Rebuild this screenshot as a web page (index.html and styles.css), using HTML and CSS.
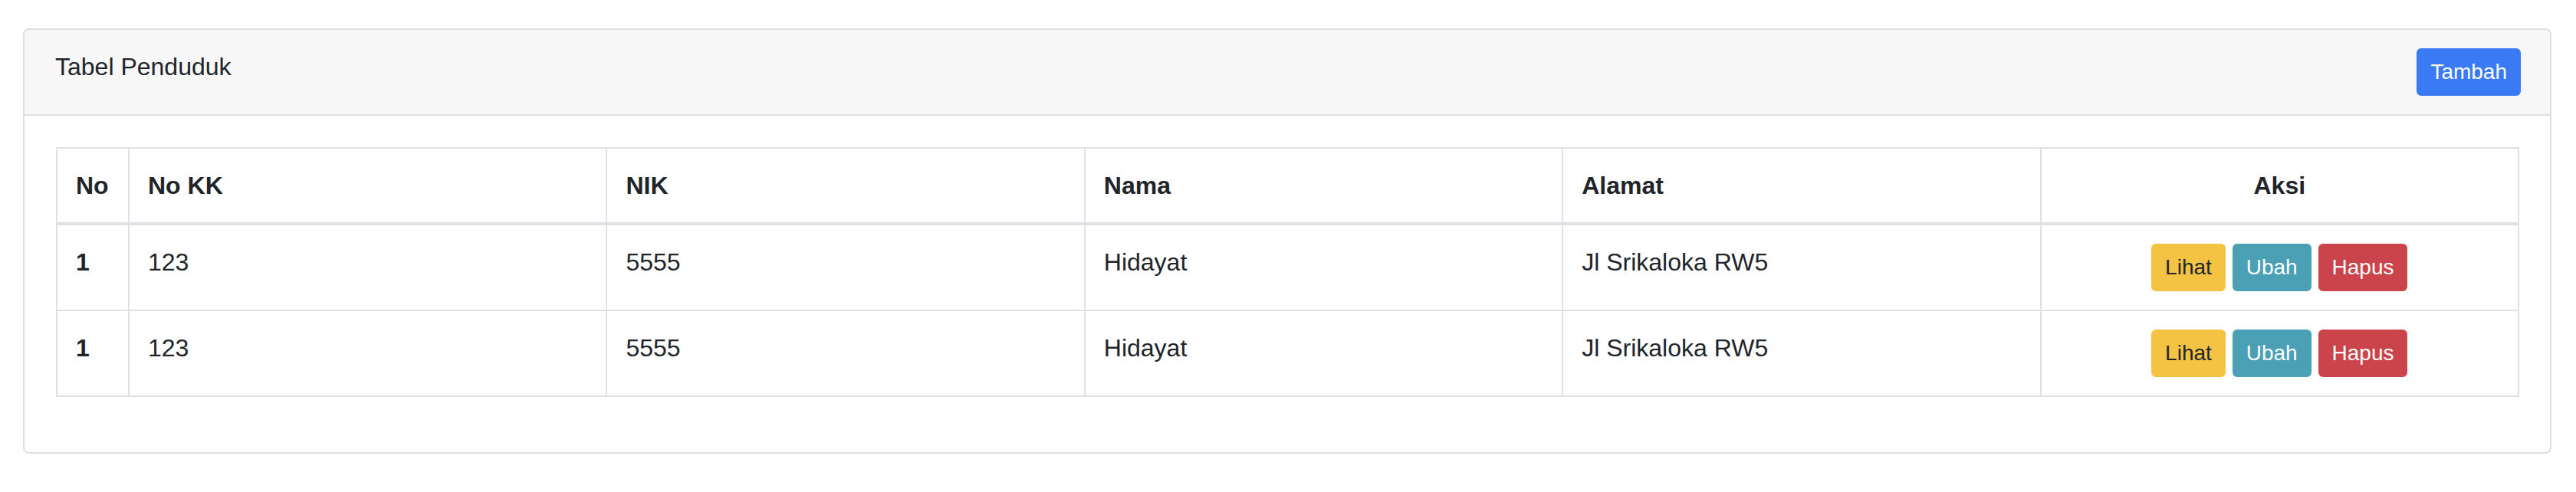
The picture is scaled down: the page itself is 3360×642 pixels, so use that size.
FILE: index.html
```html
<!DOCTYPE html>
<html lang="id">
<head>
<meta charset="utf-8">
<title>Tabel Penduduk</title>
<link rel="stylesheet" href="styles.css">
</head>
<body>
<div class="page">
  <div class="card">
    <div class="card-header">
      <span class="title">Tabel Penduduk</span>
      <button class="btn btn-primary">Tambah</button>
    </div>
    <div class="card-body">
      <table class="table">
        <colgroup>
          <col class="col-no">
          <col><col><col><col><col>
        </colgroup>
        <thead>
          <tr>
            <th>No</th>
            <th>No KK</th>
            <th>NIK</th>
            <th>Nama</th>
            <th>Alamat</th>
            <th class="center">Aksi</th>
          </tr>
        </thead>
        <tbody>
          <tr>
            <th>1</th>
            <td>123</td>
            <td>5555</td>
            <td>Hidayat</td>
            <td>Jl Srikaloka RW5</td>
            <td class="center"><button class="btn btn-warning">Lihat</button> <button class="btn btn-info">Ubah</button> <button class="btn btn-danger">Hapus</button></td>
          </tr>
          <tr>
            <th>1</th>
            <td>123</td>
            <td>5555</td>
            <td>Hidayat</td>
            <td>Jl Srikaloka RW5</td>
            <td class="center"><button class="btn btn-warning">Lihat</button> <button class="btn btn-info">Ubah</button> <button class="btn btn-danger">Hapus</button></td>
          </tr>
        </tbody>
      </table>
    </div>
  </div>
</div>
</body>
</html>
```

FILE: styles.css
```css
* { box-sizing: border-box; }

html, body {
  margin: 0;
  background: #ffffff;
}

body {
  font-family: "Liberation Sans", Arial, sans-serif;
  font-size: 32px;
  line-height: 48px;
  color: #212529;
}

.page {
  padding: 37px 32px 0 30px;
}

.card {
  border: 2px solid #dfdfdf;
  border-radius: 8px;
  background: #ffffff;
}

.card-header {
  display: flex;
  justify-content: space-between;
  align-items: flex-start;
  padding: 24px 38px 24px 40px;
  background: #f7f7f7;
  border-bottom: 2px solid #dfdfdf;
  border-radius: 6px 6px 0 0;
}

.title {
  line-height: 48px;
}

.card-body {
  padding: 41px 40px 40px 41px;
}

.table {
  width: 100%;
  border-collapse: collapse;
  table-layout: fixed;
  margin-bottom: 32px;
}

.col-no { width: 94px; }

.table th,
.table td {
  padding: 24px;
  border: 2px solid #dee2e6;
  vertical-align: top;
  text-align: left;
  line-height: 48px;
}

.table th { font-weight: bold; }

.table thead th {
  vertical-align: bottom;
  border-bottom: 4px solid #dee2e6;
}

.table .center { text-align: center; }

.btn {
  display: inline-block;
  font-family: "Liberation Sans", Arial, sans-serif;
  font-size: 28px;
  line-height: 42px;
  padding: 8px 16px;
  border: 2px solid transparent;
  border-radius: 6px;
  vertical-align: middle;
  cursor: pointer;
}

.btn-primary { background: #3a7bf5; border-color: #3a7bf5; color: #ffffff; }
.btn-warning { background: #f5c344; border-color: #f5c344; color: #212529; }
.btn-info { background: #4ba0b5; border-color: #4ba0b5; color: #ffffff; }
.btn-danger { background: #cb444b; border-color: #cb444b; color: #ffffff; }
```
